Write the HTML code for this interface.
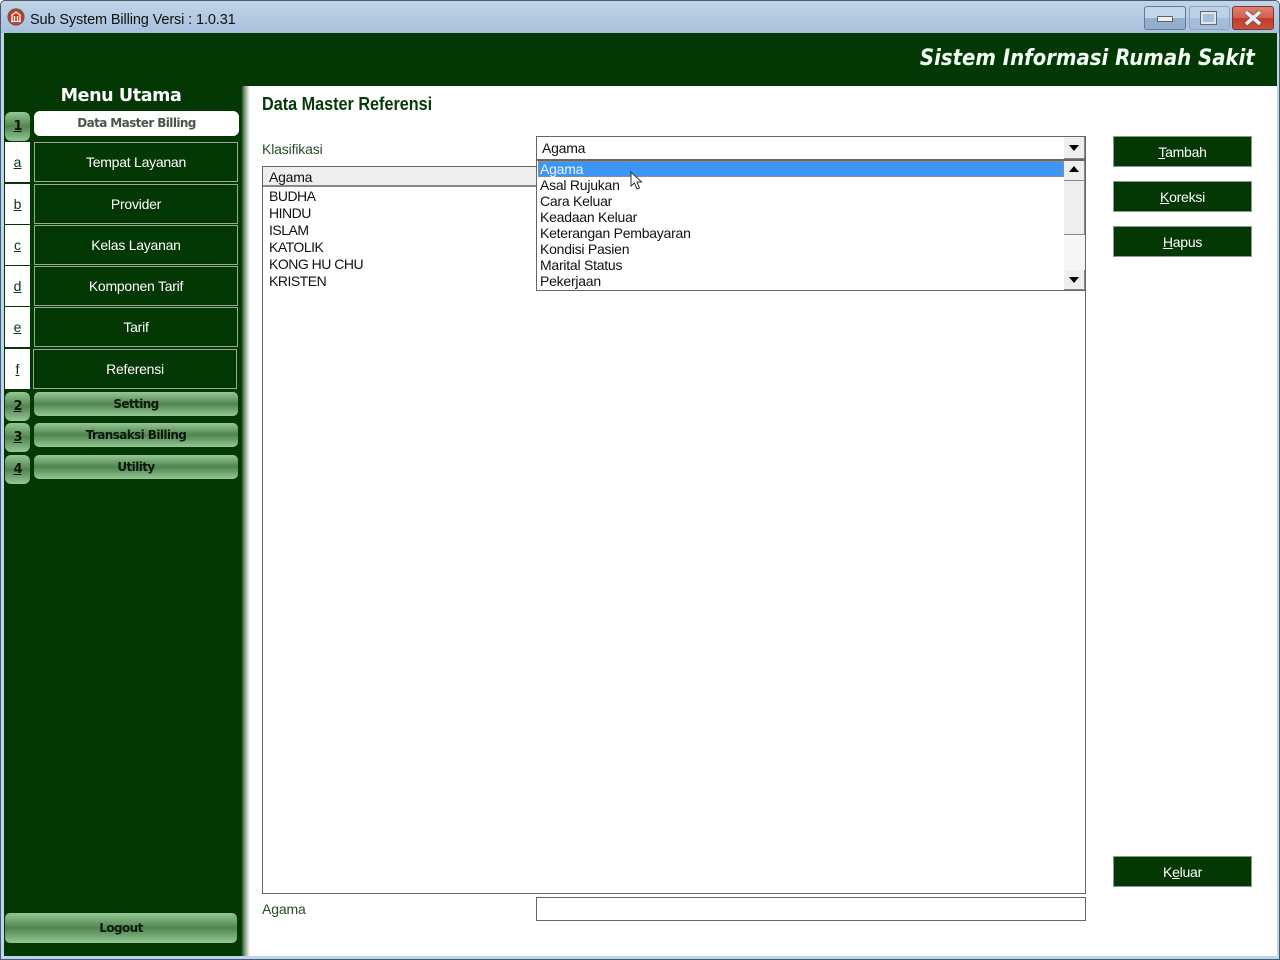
<!DOCTYPE html>
<html><head><meta charset="utf-8"><style>
html,body{margin:0;padding:0;width:1280px;height:960px;overflow:hidden;background:#fff}
div,span.a{position:absolute;box-sizing:border-box}
.t{white-space:nowrap;font-family:"Liberation Sans",sans-serif}
.c{text-align:center}
.nav{left:34px;width:204px;height:40px;background:#033703;border:1px solid #9aa89a;color:#fff;font:14px/38px "Liberation Sans",sans-serif;letter-spacing:-.25px;text-align:center}
.tab{left:5px;width:25px;height:40px;background:#fff;color:#063a06;font:14px/40px "Liberation Sans",sans-serif;text-align:center;text-decoration:underline}
.g{left:34px;width:204px;height:24px;border-radius:5px;background:linear-gradient(#93c793,#528452 50%,#93c793);color:#0b1a0b;font:bold 12px/25px "DejaVu Sans",sans-serif;letter-spacing:-.6px;text-align:center}
.n{left:5px;width:25px;height:29px;border-radius:6px;background:linear-gradient(#93c793,#528452 50%,#93c793);color:#0b1a0b;font:bold 13px/30px "DejaVu Sans",sans-serif;letter-spacing:-1px;text-align:center;text-decoration:underline}
.l{font:14px/16px "Liberation Sans",sans-serif;letter-spacing:-.24px;color:#111;white-space:nowrap}
.u{letter-spacing:-.5px}
.btn{left:1113px;width:139px;height:31px;background:#033703;border:1px solid #8b9b8b;color:#fff;font:14px/30px "Liberation Sans",sans-serif;letter-spacing:-.25px;text-align:center}
.sb{background:#eee;border-bottom:1px solid #888;border-right:1px solid #888}
</style></head><body>
<!-- window frame -->
<div style="left:0;top:0;width:1280px;height:960px;background:#bcd6ee;border:1px solid #4a5a6a;border-radius:5px 5px 0 0"></div>
<div style="left:1px;top:1px;width:1278px;height:32px;background:linear-gradient(#c0d4e8,#a7c0dc);border-radius:5px 5px 0 0"></div>
<!-- app icon -->
<svg style="position:absolute;left:7px;top:8px" width="18" height="18" viewBox="0 0 18 18"><circle cx="9" cy="9" r="8" fill="#c8381c" stroke="#6a5a50" stroke-width="1.200"/><path d="M5 13V7l4-3 4 3v6M7.500 13V8M10.500 13V8M4 13.500h10" fill="none" stroke="#fff" stroke-width="1.300"/></svg>
<div class="t" style="left:30px;top:11px;font-size:14.500px;line-height:18px;color:#111;letter-spacing:-.12px">Sub System Billing Versi : 1.0.31</div>
<!-- window buttons -->
<div style="left:1144px;top:6px;width:42px;height:24px;border:1px solid #60789a;border-radius:3px;background:linear-gradient(#c3d5e8 50%,#94aecb 50%)"></div>
<div style="left:1157px;top:16px;width:16px;height:6px;background:#eee;border:1px solid #566;border-radius:1px"></div>
<div style="left:1189px;top:6px;width:41px;height:24px;border:1px solid #8ba4c0;border-radius:3px;background:linear-gradient(#bdd0e4 50%,#a3bcd8 50%)"></div>
<div style="left:1200px;top:11px;width:17px;height:14px;background:#a9bfd8;border:3px solid #e4e4e4;outline:1px solid #566a80;outline-offset:-1px"></div>
<div style="left:1232px;top:6px;width:42px;height:24px;border:1px solid #7a3a30;border-radius:3px;background:linear-gradient(#e08070,#d06050 50%,#c03c28 50%,#c85040)"></div>
<svg style="position:absolute;left:1243px;top:10px" width="20" height="16" viewBox="0 0 20 16"><path d="M3 2l14 12M17 2L3 14" stroke="#556" stroke-width="5"/><path d="M3 2l14 12M17 2L3 14" stroke="#eee" stroke-width="3.500"/></svg>
<!-- dark panel -->
<div style="left:4px;top:33px;width:1273px;height:923px;background:#fff"></div>
<div style="left:4px;top:33px;width:1273px;height:53px;background:#033703"></div>
<div style="left:4px;top:86px;width:237px;height:870px;background:#033703"></div>
<div style="left:241px;top:86px;width:9px;height:870px;background:linear-gradient(90deg,#033703,#7f9c7f 40%,#fff)"></div>
<div class="t" style="right:25px;top:44px;font:italic bold 22px/30px 'DejaVu Sans',sans-serif;color:#f4fff4;transform:scaleX(.896);transform-origin:100% 0">Sistem Informasi Rumah Sakit</div>
<!-- menu -->
<div class="t c" style="left:34px;top:85px;width:174px;font:bold 17.500px/23px 'DejaVu Sans',sans-serif;color:#fff;letter-spacing:-.4px">Menu Utama</div>
<div class="n" style="top:112px">1</div>
<div style="left:34px;top:111px;width:205px;height:25px;background:#fff;border-radius:6px;color:#4a564a;font:bold 12px/25px 'DejaVu Sans',sans-serif;letter-spacing:-.6px;text-align:center">Data Master Billing</div>
<div class="tab" style="top:142px">a</div><div class="nav" style="top:142px">Tempat Layanan</div>
<div class="tab" style="top:184px">b</div><div class="nav" style="top:184px">Provider</div>
<div class="tab" style="top:225px">c</div><div class="nav" style="top:225px">Kelas Layanan</div>
<div class="tab" style="top:266px">d</div><div class="nav" style="top:266px">Komponen Tarif</div>
<div class="tab" style="top:307px">e</div><div class="nav" style="top:307px">Tarif</div>
<div class="tab" style="top:349px">f</div><div class="nav" style="top:349px;left:33px">Referensi</div>
<div class="n" style="top:392px">2</div><div class="g" style="top:392px">Setting</div>
<div class="n" style="top:423px">3</div><div class="g" style="top:423px">Transaksi Billing</div>
<div class="n" style="top:455px">4</div><div class="g" style="top:455px">Utility</div>
<div class="g" style="left:5px;top:913px;width:232px;height:30px;line-height:31px">Logout</div>
<!-- content -->
<div class="t" style="left:262px;top:93px;font:bold 18px/22px 'Liberation Sans',sans-serif;color:#063a06;transform:scaleX(.9);transform-origin:0 0">Data Master Referensi</div>
<div class="l" style="left:262px;top:141px;color:#264c26;letter-spacing:-.15px">Klasifikasi</div>
<div style="left:262px;top:166px;width:824px;height:728px;border:1px solid #666;background:#fff"></div>
<div style="left:263px;top:167px;width:274px;height:20px;background:#eee;border-bottom:2px solid #888"></div>
<div class="l" style="left:269px;top:169px">Agama</div>
<div class="l u" style="left:269px;top:188px">BUDHA</div>
<div class="l u" style="left:269px;top:205px">HINDU</div>
<div class="l u" style="left:269px;top:222px">ISLAM</div>
<div class="l u" style="left:269px;top:239px">KATOLIK</div>
<div class="l u" style="left:269px;top:256px">KONG HU CHU</div>
<div class="l u" style="left:269px;top:273px">KRISTEN</div>
<!-- combo -->
<div style="left:536px;top:136px;width:550px;height:24px;border:1px solid #666;background:#fff"></div>
<div class="l" style="left:542px;top:140px">Agama</div>
<div class="sb" style="left:1064px;top:137px;width:21px;height:22px"></div>
<svg style="position:absolute;left:1068px;top:145px" width="12" height="7"><path d="M1 0h10L6 6z" fill="#000"/></svg>
<!-- dropdown -->
<div style="left:536px;top:160px;width:550px;height:131px;border:1px solid #666;background:#fff"></div>
<div style="left:538px;top:161px;width:526px;height:16px;background:#3d95f5;border:1px dotted #c88a30"></div>
<div class="l" style="left:540px;top:161px;color:#eaf4ff">Agama</div>
<div class="l" style="left:540px;top:177px">Asal Rujukan</div>
<div class="l" style="left:540px;top:193px">Cara Keluar</div>
<div class="l" style="left:540px;top:209px">Keadaan Keluar</div>
<div class="l" style="left:540px;top:225px">Keterangan Pembayaran</div>
<div class="l" style="left:540px;top:241px">Kondisi Pasien</div>
<div class="l" style="left:540px;top:257px">Marital Status</div>
<div class="l" style="left:540px;top:273px">Pekerjaan</div>
<div style="left:1064px;top:161px;width:21px;height:129px;background:#f6f6f6"></div>
<div class="sb" style="left:1064px;top:161px;width:21px;height:20px"></div>
<svg style="position:absolute;left:1068px;top:166px" width="12" height="7"><path d="M1 6h10L6 0z" fill="#000"/></svg>
<div class="sb" style="left:1064px;top:181px;width:21px;height:54px"></div>
<div class="sb" style="left:1064px;top:270px;width:21px;height:20px"></div>
<svg style="position:absolute;left:1068px;top:277px" width="12" height="7"><path d="M1 0h10L6 6z" fill="#000"/></svg>
<!-- cursor -->
<svg style="position:absolute;left:630px;top:171px" width="14" height="20" viewBox="0 0 14 20"><path d="M1 1v14l3.500-3 2.500 6 2.500-1-2.500-6h4.500z" fill="#fff" stroke="#333" stroke-width="1"/></svg>
<!-- buttons -->
<div class="btn" style="top:136px"><u>T</u>ambah</div>
<div class="btn" style="top:181px"><u>K</u>oreksi</div>
<div class="btn" style="top:226px"><u>H</u>apus</div>
<div class="btn" style="top:856px">K<u>e</u>luar</div>
<!-- bottom field -->
<div class="l" style="left:262px;top:901px;color:#264c26;letter-spacing:-.15px">Agama</div>
<div style="left:536px;top:897px;width:550px;height:24px;border:1px solid #666;background:#fff"></div>
</body></html>
